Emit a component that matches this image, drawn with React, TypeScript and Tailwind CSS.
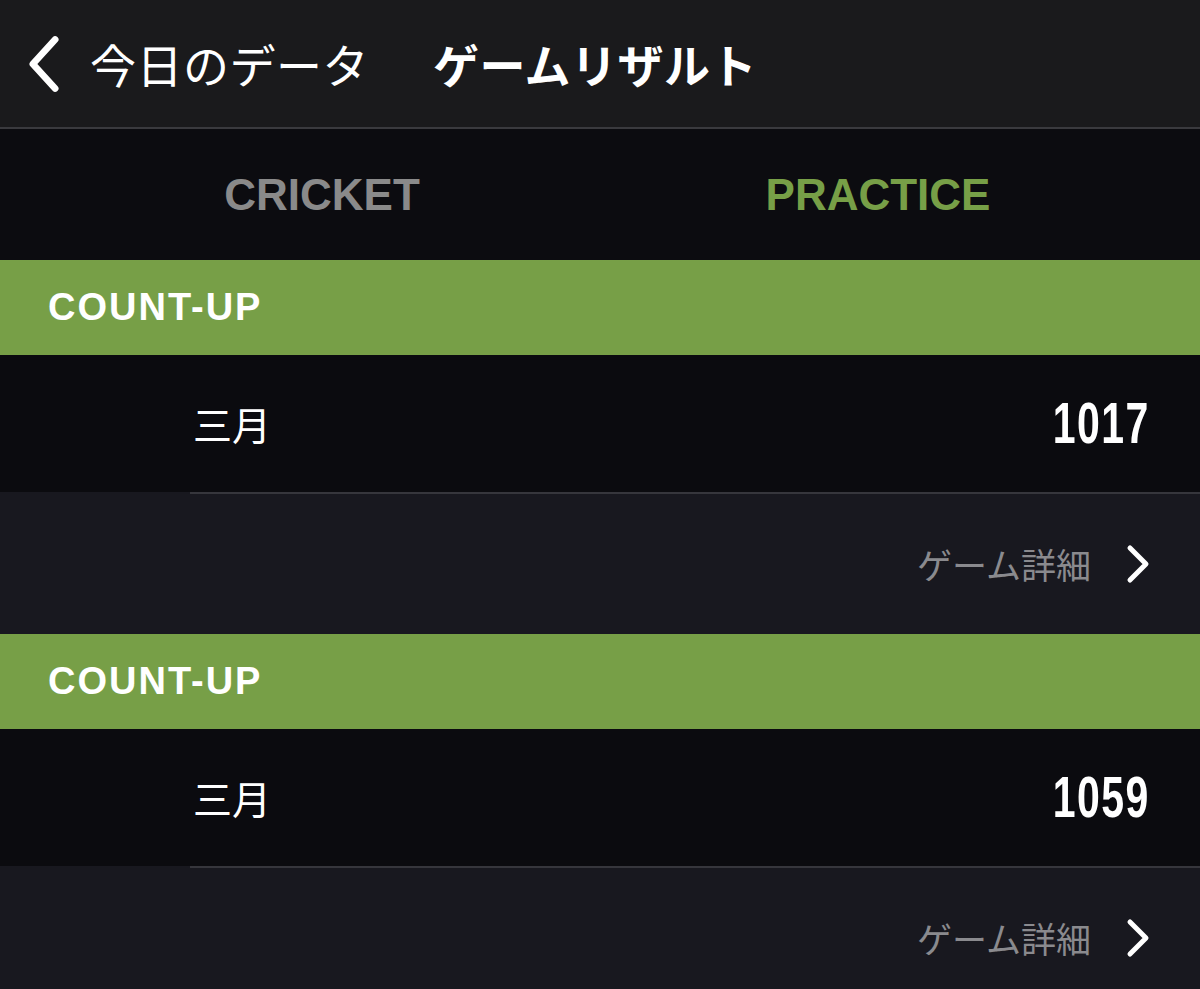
import React from 'react';

const sans = "font-['Liberation_Sans','Noto_Sans_CJK_JP',sans-serif]";
const jp = "font-['Noto_Sans_CJK_JP','Liberation_Sans',sans-serif]";

function Chevron({ dir, className }: { dir: 'left' | 'right'; className: string }) {
  const d = dir === 'left' ? 'M24 4 L4 26 L24 48' : 'M4 4 L20 20 L4 36';
  return (
    <svg className={className} viewBox={dir === 'left' ? '0 0 28 52' : '0 0 24 40'} fill="none">
      <path d={d} stroke="white" strokeWidth={dir === 'left' ? 6 : 5} strokeLinecap="round" strokeLinejoin="round" />
    </svg>
  );
}

function GameBlock({ title, name, score }: { title: string; name: string; score: string }) {
  return (
    <div>
      <div className="h-[95px] bg-[#779f47] flex items-center pl-[48px]">
        <span className={`${sans} text-white font-bold text-[38px] tracking-[2px]`}>{title}</span>
      </div>
      <div className="bg-[#0b0b0f]">
        <div className="h-[137px] flex items-center justify-between pl-[193px] pr-[50px]">
          <span className={`${jp} text-white text-[39px]`}>{name}</span>
          <span className="font-['Liberation_Sans_Narrow','Liberation_Sans',sans-serif] text-white font-bold text-[57px] tracking-[2px] inline-block origin-right scale-x-[0.72] leading-none">
            {score}
          </span>
        </div>
      </div>
      <div className="bg-[#18181f]">
        <div className="ml-[190px] h-[2px] bg-[#36363c]" />
        <div className="h-[140px] flex items-center justify-end pr-[50px]">
          <span className={`${jp} text-[#8a8a8e] text-[35px] mr-[35px]`}>ゲーム詳細</span>
          <Chevron dir="right" className="w-[24px] h-[40px]" />
        </div>
      </div>
    </div>
  );
}

export default function App() {
  return (
    <div className="w-[1200px] h-[989px] overflow-hidden bg-[#18181f]">
      <div className="h-[127px] bg-[#1a1a1c] flex items-center pl-[26px]">
        <Chevron dir="left" className="w-[36px] h-[58px] mr-[28px]" />
        <span className={`${jp} text-white text-[46px] tracking-[0.5px]`}>今日のデータ</span>
        <span className={`${jp} text-white font-bold text-[46px] ml-[64px] tracking-[0.5px]`}>ゲームリザルト</span>
      </div>
      <div className="h-[2px] bg-[#3a3a3e]" />
      <div className="h-[131px] bg-[#0c0c10] grid grid-cols-2 items-center">
        <div className={`${sans} text-center pl-[44px] text-[#8a8a8a] font-bold text-[44px]`}>CRICKET</div>
        <div className={`${sans} text-center text-[#779f47] font-bold text-[44px] pr-[44px]`}>PRACTICE</div>
      </div>
      <GameBlock title="COUNT-UP" name="三月" score="1017" />
      <GameBlock title="COUNT-UP" name="三月" score="1059" />
    </div>
  );
}
